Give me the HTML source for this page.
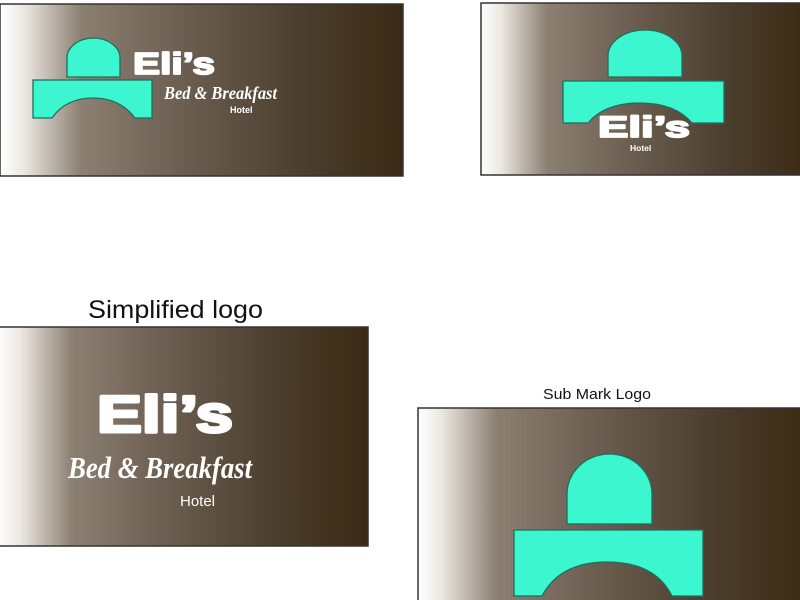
<!DOCTYPE html>
<html><head><meta charset="utf-8"><style>
html,body{margin:0;padding:0;background:#fff;width:800px;height:600px;overflow:hidden}
svg{display:block}
.b{font-family:"Liberation Sans",sans-serif;font-weight:bold;fill:#fff}
.e{stroke:#fff;stroke-linejoin:round}
.s{font-family:"Liberation Serif",serif;font-style:italic;font-weight:bold;fill:#fff}
</style></head><body>
<svg width="800" height="600" viewBox="0 0 800 600" xmlns="http://www.w3.org/2000/svg">
<defs>
<linearGradient id="g" x1="0" y1="0" x2="1" y2="0">
<stop offset="0" stop-color="#ffffff"/>
<stop offset="0.06" stop-color="#ece8e2"/>
<stop offset="0.2" stop-color="#8c8072"/>
<stop offset="0.45" stop-color="#6c5e50"/>
<stop offset="0.75" stop-color="#4c3e2e"/>
<stop offset="1" stop-color="#3a2a14"/>
</linearGradient>
</defs>
<g stroke="#333" stroke-width="1.5">
<rect x="0" y="4" width="403" height="172" fill="url(#g)"/>
<rect x="481" y="3" width="330" height="172" fill="url(#g)"/>
<rect x="-2" y="327" width="370" height="219" fill="url(#g)"/>
<rect x="418" y="408" width="390" height="200" fill="url(#g)"/>
</g>
<g fill="#3cf6cf" stroke="#1f6e5c" stroke-width="1.3">
<path d="M67 77 V58 A26.5 20 0 0 1 120 58 V77 Z"/>
<path d="M33 80 H152 V118 H135 Q120 98 93 98 Q66 98 52 118 H33 Z"/>
<path d="M608 77 V56 A37 26 0 0 1 682 56 V77 Z"/>
<path d="M563 81 H724 V123 H692 Q675 103 640 103 Q605 103 588 123 H563 Z"/>
<path d="M567 524 V494 A42.5 40 0 0 1 652 494 V524 Z"/>
<path d="M514 530 H703 V596 H672 Q655 562 607 562 Q560 562 542 596 H514 Z"/>
</g>
<text class="b e" stroke-width="1.8" x="133" y="74" font-size="31" textLength="82" lengthAdjust="spacingAndGlyphs">Eli’s</text>
<text class="s" x="164" y="99" font-size="18" textLength="113" lengthAdjust="spacingAndGlyphs">Bed &amp; Breakfast</text>
<text class="b" x="230" y="113" font-size="9">Hotel</text>
<text class="b e" stroke-width="1.8" x="598" y="137" font-size="30" textLength="92" lengthAdjust="spacingAndGlyphs">Eli’s</text>
<text class="b" x="630" y="151" font-size="8.5">Hotel</text>
<text font-family="Liberation Sans,sans-serif" x="88" y="318" font-size="25" fill="#111" textLength="175" lengthAdjust="spacingAndGlyphs">Simplified logo</text>
<text class="b e" stroke-width="3" x="97" y="432" font-size="52" textLength="136" lengthAdjust="spacingAndGlyphs">Eli’s</text>
<text class="s" x="68" y="478" font-size="31" textLength="184" lengthAdjust="spacingAndGlyphs">Bed &amp; Breakfast</text>
<text font-family="Liberation Sans,sans-serif" x="180" y="506" font-size="15" fill="#fff">Hotel</text>
<text font-family="Liberation Sans,sans-serif" x="543" y="399" font-size="15" fill="#111" textLength="108" lengthAdjust="spacingAndGlyphs">Sub Mark Logo</text>
</svg>
</body></html>
